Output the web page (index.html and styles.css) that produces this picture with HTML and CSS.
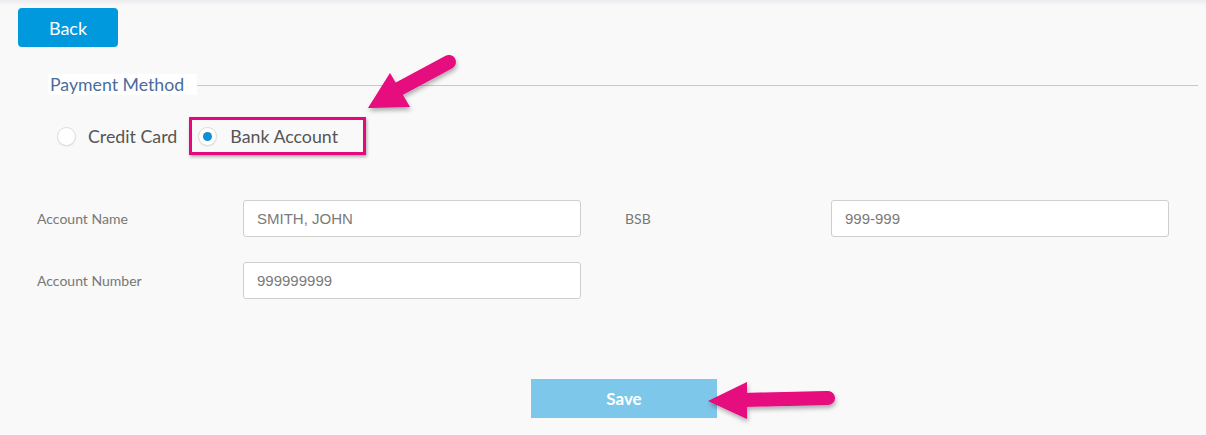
FILE: index.html
```html
<!DOCTYPE html>
<html>
<head>
<meta charset="utf-8">
<link rel="stylesheet" href="styles.css">
</head>
<body>
<div class="page">
  <div class="top">
    <button class="btn-back">Back</button>
  </div>
  <div class="legend-row">
    <span class="legend">Payment Method</span>
    <span class="rule"></span>
  </div>
  <div class="radios">
    <label class="radio"><span class="dot"></span><span class="rtext">Credit Card</span></label>
    <label class="radio selected"><span class="dot on"></span><span class="rtext">Bank Account</span></label>
  </div>
  <div class="form">
    <div class="field"><span class="flabel">Account Name</span><div class="input">SMITH, JOHN</div></div>
    <div class="field"><span class="flabel">BSB</span><div class="input">999-999</div></div>
    <div class="field"><span class="flabel">Account Number</span><div class="input">999999999</div></div>
  </div>
  <div class="actions">
    <button class="btn-save">Save</button>
  </div>
  <svg class="arrows" width="1206" height="435" viewBox="0 0 1206 435">
    <defs>
      <filter id="sh" x="-20%" y="-20%" width="140%" height="140%">
        <feDropShadow dx="1" dy="3" stdDeviation="2" flood-color="#000" flood-opacity="0.3"/>
      </filter>
    </defs>
    <g filter="url(#sh)" fill="#e6077e" stroke="#e6077e">
      <line x1="449" y1="62" x2="395" y2="91" stroke-width="14" stroke-linecap="round"/>
      <polygon points="368,108 390,73 410,107" stroke="none"/>
      <line x1="828" y1="398" x2="742" y2="400" stroke-width="14" stroke-linecap="round"/>
      <polygon points="708,401 747,382 747,419" stroke="none"/>
    </g>
  </svg>
</div>
</body>
</html>
```

FILE: styles.css
```css
html, body {
  margin: 0;
  padding: 0;
}
body {
  background: #f9f9f9;
  width: 1206px;
  height: 435px;
  overflow: hidden;
  font-family: "Lato", "Liberation Sans", sans-serif;
}
.page {
  position: relative;
  height: 435px;
  box-shadow: inset 0 5px 4px -3px #e8e6ec;
}
.top {
  padding: 8px 0 0 18px;
}
.btn-back {
  width: 100px;
  height: 39px;
  border: none;
  border-radius: 4px;
  background: #0099de;
  color: #fff;
  font-family: "Lato", sans-serif;
  font-size: 18px;
  padding: 0;
  display: block;
}
.legend-row {
  display: flex;
  align-items: center;
  margin-top: 27px;
  padding-left: 48px;
  padding-right: 8px;
}
.legend {
  background: #fff;
  color: #4a6d9c;
  font-size: 17.7px;
  height: 21px;
  line-height: 21px;
  padding: 0 13px 0 2px;
}
.rule {
  flex: 1;
  border-top: 1px solid #c8c8c8;
  margin-top: 1px;
}
.radios {
  display: flex;
  align-items: center;
  margin-top: 22px;
  padding-left: 57px;
  gap: 12px;
}
.radio {
  display: flex;
  align-items: center;
  gap: 12px;
  color: #555;
  font-size: 17.8px;
}
.radio.selected {
  border: 3px solid #e6077e;
  height: 32px;
  padding: 0 25px 0 6px;
  box-shadow: 1px 2px 3px rgba(0,0,0,0.3);
  gap: 13px;
}
.dot {
  width: 17px;
  height: 17px;
  border-radius: 50%;
  background: #fff;
  border: 1px solid #dcdcdc;
  box-shadow: 0 1px 1px rgba(0,0,0,0.06);
  display: flex;
  align-items: center;
  justify-content: center;
}
.dot.on::after {
  content: "";
  width: 9px;
  height: 9px;
  border-radius: 50%;
  background: #0a8fd8;
}
.form {
  display: grid;
  grid-template-columns: 543px 543px;
  column-gap: 45px;
  row-gap: 25px;
  margin-top: 45px;
  padding-left: 37px;
}
.field {
  display: grid;
  grid-template-columns: 206px 338px;
  align-items: center;
}
.flabel {
  color: #777;
  font-size: 14px;
}
.input {
  height: 35px;
  border: 1px solid #cfcfcf;
  border-radius: 3px;
  background: #fff;
  box-sizing: content-box;
  width: 323px;
  padding-left: 13px;
  display: flex;
  align-items: center;
  font-family: "Liberation Sans", Arial, sans-serif;
  font-size: 15px;
  color: #7a7a7a;
}
.actions {
  margin-top: 80px;
  padding-left: 531px;
}
.btn-save {
  width: 186px;
  height: 39px;
  border: none;
  background: #7dc7ea;
  color: #fff;
  font-family: "Lato", sans-serif;
  font-weight: 700;
  font-size: 17px;
  padding: 0;
  display: block;
}
.arrows {
  position: absolute;
  top: 0;
  left: 0;
  pointer-events: none;
}
```
